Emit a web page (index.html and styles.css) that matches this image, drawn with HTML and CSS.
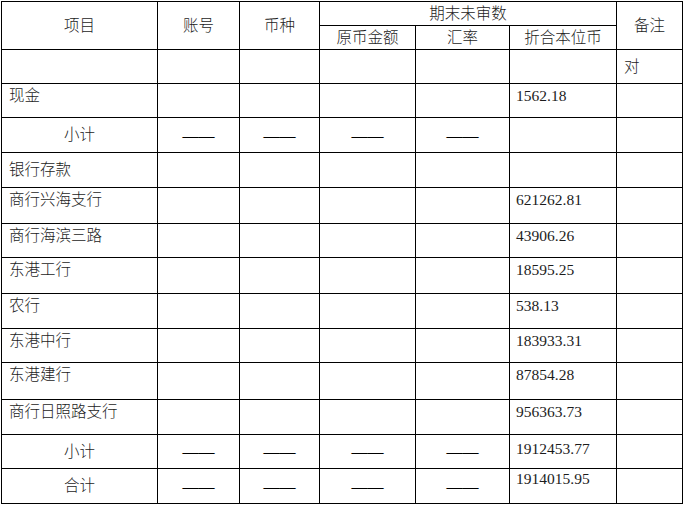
FILE: index.html
```html
<!DOCTYPE html>
<html lang="zh-CN">
<head>
<meta charset="utf-8">
<title>期末未审数</title>
<link rel="stylesheet" href="styles.css">
</head>
<body>
<div class="sheet">
  <div class="cell hd tall">项目</div>
  <div class="cell hd tall">账号</div>
  <div class="cell hd tall">币种</div>
  <div class="cell hd wide">期末未审数</div>
  <div class="cell hd tall">备注</div>
  <div class="cell hd">原币金额</div>
  <div class="cell hd">汇率</div>
  <div class="cell hd">折合本位币</div>

  <div class="cell"></div><div class="cell"></div><div class="cell"></div><div class="cell"></div><div class="cell"></div><div class="cell"></div>
  <div class="cell mid">对</div>

  <div class="cell">现金</div><div class="cell"></div><div class="cell"></div><div class="cell"></div><div class="cell"></div>
  <div class="cell num">1562.18</div><div class="cell"></div>

  <div class="cell ctr">小计</div>
  <div class="cell ctr dash">——</div><div class="cell ctr dash">——</div><div class="cell ctr dash">——</div><div class="cell ctr dash">——</div>
  <div class="cell"></div><div class="cell"></div>

  <div class="cell mid">银行存款</div><div class="cell"></div><div class="cell"></div><div class="cell"></div><div class="cell"></div><div class="cell"></div><div class="cell"></div>

  <div class="cell">商行兴海支行</div><div class="cell"></div><div class="cell"></div><div class="cell"></div><div class="cell"></div>
  <div class="cell num">621262.81</div><div class="cell"></div>

  <div class="cell">商行海滨三路</div><div class="cell"></div><div class="cell"></div><div class="cell"></div><div class="cell"></div>
  <div class="cell num">43906.26</div><div class="cell"></div>

  <div class="cell">东港工行</div><div class="cell"></div><div class="cell"></div><div class="cell"></div><div class="cell"></div>
  <div class="cell num">18595.25</div><div class="cell"></div>

  <div class="cell">农行</div><div class="cell"></div><div class="cell"></div><div class="cell"></div><div class="cell"></div>
  <div class="cell num">538.13</div><div class="cell"></div>

  <div class="cell">东港中行</div><div class="cell"></div><div class="cell"></div><div class="cell"></div><div class="cell"></div>
  <div class="cell num">183933.31</div><div class="cell"></div>

  <div class="cell">东港建行</div><div class="cell"></div><div class="cell"></div><div class="cell"></div><div class="cell"></div>
  <div class="cell num">87854.28</div><div class="cell"></div>

  <div class="cell">商行日照路支行</div><div class="cell"></div><div class="cell"></div><div class="cell"></div><div class="cell"></div>
  <div class="cell num">956363.73</div><div class="cell"></div>

  <div class="cell ctr">小计</div>
  <div class="cell ctr dash">——</div><div class="cell ctr dash">——</div><div class="cell ctr dash">——</div><div class="cell ctr dash">——</div>
  <div class="cell num low">1912453.77</div><div class="cell"></div>

  <div class="cell ctr">合计</div>
  <div class="cell ctr dash">——</div><div class="cell ctr dash">——</div><div class="cell ctr dash">——</div><div class="cell ctr dash">——</div>
  <div class="cell num high">1914015.95</div><div class="cell"></div>
</div>
</body>
</html>
```

FILE: styles.css
```css
html, body {
  margin: 0;
  background: #fff;
}

body {
  font-family: "Liberation Serif", "Noto Sans CJK SC", serif;
  font-size: 15.5px;
  font-weight: 300;
  color: #1c1c1c;
}

.sheet {
  display: grid;
  box-sizing: border-box;
  width: 682px;
  margin: 1px 0 0 1px;
  padding: 1px;
  gap: 1px;
  background: #000;
  grid-template-columns: 155px 81px 79px 95px 93px 106px 65px;
  grid-template-rows: 23px 23px 33px 33px 34px 34px 35px 33px 35px 34px 33px 36px 34px 33px 34px;
}

.cell {
  display: flex;
  align-items: flex-start;
  padding: 2px 6px 0 7px;
  line-height: 20px;
  white-space: nowrap;
  background: #fff;
}

.hd {
  align-items: center;
  justify-content: center;
  padding: 0;
}

.tall {
  grid-row: span 2;
}

.wide {
  grid-column: span 3;
}

.mid {
  align-items: center;
  padding: 0 6px 0 7px;
}

.ctr {
  align-items: center;
  justify-content: center;
  padding: 0;
}

.dash {
  font-size: 16px;
  font-weight: 400;
  color: #000;
  padding-top: 1px;
}

.num {
  padding-left: 6px;
}

.num.low {
  padding-top: 4px;
}

.num.high {
  padding-top: 0;
}
```
